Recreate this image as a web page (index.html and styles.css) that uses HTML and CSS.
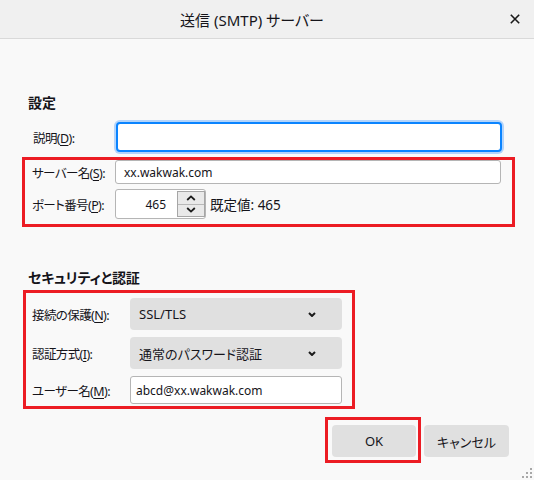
FILE: index.html
```html
<!DOCTYPE html>
<html lang="ja">
<head>
<meta charset="utf-8">
<title>送信 (SMTP) サーバー</title>
<link rel="stylesheet" href="styles.css">
</head>
<body>
<div class="titlebar">
  <div class="title">送信 (SMTP) サーバー</div>
  <div class="close">
    <svg width="10" height="10" viewBox="0 0 10 10"><path d="M0.8 0.8 L9.2 9.2 M9.2 0.8 L0.8 9.2" stroke="#1a1a1a" stroke-width="1.6" fill="none"/></svg>
  </div>
</div>

<div class="content">
  <div class="heading h1">設定</div>

  <div class="desc-row">
    <label class="label">説明(<u>D</u>):</label>
    <div class="input focused"></div>
  </div>

  <div class="mark box1">
    <label class="label">サーバー名(<u>S</u>):</label>
    <div class="input server">xx.wakwak.com</div>
    <label class="label">ポート番号(<u>P</u>):</label>
    <div class="port-line">
      <div class="port">
        <span class="port-value">465</span>
        <div class="spinner">
          <div class="spin-btn"><svg width="10" height="6" viewBox="0 0 10 6"><path d="M1.2 5 L5 1.4 L8.8 5" stroke="#1a1a1a" stroke-width="1.8" fill="none"/></svg></div>
          <div class="spin-btn"><svg width="10" height="6" viewBox="0 0 10 6"><path d="M1.2 1 L5 4.6 L8.8 1" stroke="#1a1a1a" stroke-width="1.8" fill="none"/></svg></div>
        </div>
      </div>
      <span class="default">既定値: 465</span>
    </div>
  </div>

  <div class="heading h2">セキュリティと認証</div>

  <div class="mark box2">
    <label class="label">接続の保護(<u>N</u>):</label>
    <div class="select"><span>SSL/TLS</span><svg width="8" height="5" viewBox="0 0 8 5"><path d="M1 1 L4 4 L7 1" stroke="#1a1a1a" stroke-width="2" fill="none"/></svg></div>
    <label class="label">認証方式(<u>I</u>):</label>
    <div class="select"><span>通常のパスワード認証</span><svg width="8" height="5" viewBox="0 0 8 5"><path d="M1 1 L4 4 L7 1" stroke="#1a1a1a" stroke-width="2" fill="none"/></svg></div>
    <label class="label">ユーザー名(<u>M</u>):</label>
    <div class="input user">abcd@xx.wakwak.com</div>
  </div>
</div>

<div class="actions">
  <div class="mark ok-mark"><button class="btn">OK</button></div>
  <button class="btn cancel">キャンセル</button>
</div>

<svg class="grip" width="10" height="10" viewBox="0 0 10 10">
  <rect x="8" y="0" width="2" height="2" fill="#a8a8a8"/>
  <rect x="4" y="4" width="2" height="2" fill="#a8a8a8"/>
  <rect x="8" y="4" width="2" height="2" fill="#a8a8a8"/>
  <rect x="0" y="8" width="2" height="2" fill="#a8a8a8"/>
  <rect x="4" y="8" width="2" height="2" fill="#a8a8a8"/>
  <rect x="8" y="8" width="2" height="2" fill="#a8a8a8"/>
</svg>
</body>
</html>
```

FILE: styles.css
```css
html {
  background: #f9f9f9;
}

body {
  margin: 0;
  width: 534px;
  height: 480px;
  position: relative;
  overflow: hidden;
  background: #f9f9f9;
  color: #15141a;
  font-family: "Noto Sans", "Noto Sans CJK JP", sans-serif;
  font-size: 13px;
  font-feature-settings: "palt";
}

.titlebar {
  display: flex;
  align-items: center;
  height: 38px;
  padding: 0 4px;
  background: #f0f0f0;
  border-bottom: 1px solid #d9d9d9;
}

.title {
  flex: 1;
  text-align: center;
  font-size: 15px;
}

.close {
  width: 30px;
  display: flex;
  justify-content: center;
  align-items: center;
}

.content {
  padding: 0 19px 0 28px;
}

.heading {
  font-weight: bold;
  font-size: 14px;
  line-height: 20px;
}

.h1 {
  margin-top: 54px;
}

.h2 {
  margin-top: 41px;
  letter-spacing: -0.2px;
}

.label {
  white-space: nowrap;
  font-size: 12.5px;
  letter-spacing: -0.6px;
}

.label u {
  text-underline-offset: 2px;
}

.desc-row {
  display: grid;
  grid-template-columns: 82px 1fr;
  align-items: center;
  margin-top: 9px;
  padding: 0 13px 0 5px;
}

.input {
  box-sizing: border-box;
  background: #fff;
  border: 1px solid #b5b5b5;
  border-radius: 3px;
  font-size: 12px;
  display: flex;
  align-items: center;
}

.focused {
  height: 30px;
  margin-left: 1px;
  border: 2px solid #0a84ff;
  border-radius: 4px;
  box-shadow: 0 0 0 2px #b3d4fb;
}

.mark {
  border: 3px solid #ec1c24;
}

.box1 {
  display: grid;
  grid-template-columns: 83px 1fr;
  align-items: center;
  row-gap: 5px;
  margin: 5px 0 0 -6px;
  padding: 0 11px 5px 7px;
}

.server {
  height: 24px;
  padding-left: 8px;
}

.port-line {
  display: flex;
  align-items: center;
}

.port {
  box-sizing: border-box;
  display: flex;
  align-items: center;
  width: 91px;
  height: 30px;
  background: #fff;
  border: 1px solid #b5b5b5;
  border-radius: 3px;
}

.port-value {
  flex: 1;
  text-align: right;
  padding-right: 11px;
  font-size: 12px;
}

.spinner {
  box-sizing: border-box;
  width: 28px;
  height: 26px;
  display: flex;
  flex-direction: column;
  border: 1px solid #a6a6a6;
  background: #e9e9e9;
}

.spin-btn {
  flex: 1;
  display: flex;
  align-items: center;
  justify-content: center;
}

.spin-btn + .spin-btn {
  border-top: 1px solid #b8b8b8;
}

.default {
  margin-left: 4px;
  font-size: 13.5px;
}

.box2 {
  box-sizing: border-box;
  width: 332px;
  display: grid;
  grid-template-columns: 98px 1fr;
  grid-template-rows: 32px 32px 28px;
  align-items: center;
  row-gap: 7px;
  margin: 2px 0 0 -5px;
  padding: 5px 10px 2px 6px;
}

.select {
  height: 32px;
  display: flex;
  align-items: center;
  justify-content: space-between;
  padding: 0 26px 0 9px;
  background: #e0e0e0;
  border-radius: 4px;
}

.select span {
  font-size: 13px;
}

.user {
  height: 28px;
  padding-left: 5px;
  font-size: 12px;
}

.actions {
  display: flex;
  justify-content: flex-end;
  align-items: flex-start;
  gap: 3px;
  margin-top: 8px;
  padding-right: 25px;
}

.ok-mark {
  padding: 5px 2px 3px 4px;
}

.btn {
  display: block;
  width: 84px;
  height: 32px;
  border: none;
  border-radius: 4px;
  background: #e0e0e0;
  color: #15141a;
  font-family: "Noto Sans", "Noto Sans CJK JP", sans-serif;
  font-size: 13px;
  font-feature-settings: "palt";
  padding: 0;
}

.cancel {
  width: 85px;
  margin-top: 8px;
}

.grip {
  position: absolute;
  right: 2px;
  bottom: 2px;
}
```
